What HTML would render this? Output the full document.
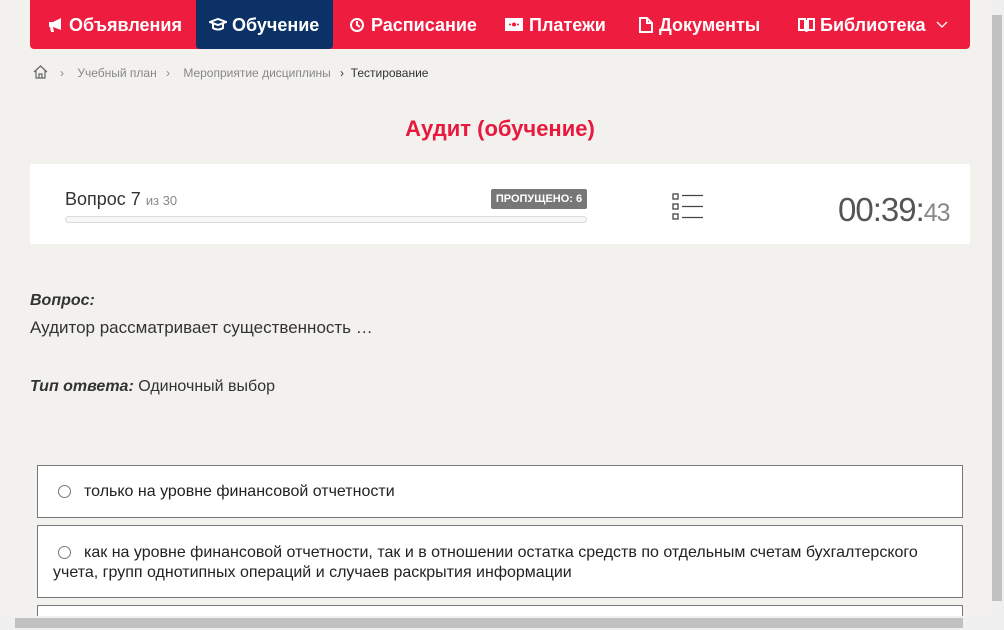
<!DOCTYPE html>
<html><head><meta charset="utf-8"><style>
*{box-sizing:border-box;margin:0;padding:0}
html,body{width:1004px;height:630px;overflow:hidden}
body{background:#f2f1ee;font-family:"Liberation Sans",sans-serif;position:relative;color:#222}
.nav{position:absolute;left:30px;top:0;width:940px;height:49px;background:#ee1c3f;border-radius:0 0 4px 4px}
.act{position:absolute;left:166px;top:0;width:137px;height:49px;background:#0b3166;border-radius:0 0 4px 4px}
.t{position:absolute;top:14px;color:#fff;font-size:18px;font-weight:bold;white-space:nowrap;line-height:22px}
.ic{position:absolute;top:17px}
.bc{position:absolute;top:66px;font-size:12px;color:#888}
.title{position:absolute;top:116px;left:0;width:1000px;text-align:center;color:#e8193c;font-size:22px;font-weight:bold}
.card{position:absolute;left:30px;top:164px;width:940px;height:80px;background:#fff}
.opt{position:absolute;left:37px;width:926px;background:#fff;border:1px solid #777;font-size:16px;color:#222}
.radio{display:inline-block;width:13px;height:13px;border:1px solid #777;border-radius:50%;vertical-align:-2px;margin-right:13px;background:#fff}
</style></head><body>
<div class="nav"><div class="act"></div></div>
<svg class="ic" style="left:48px" width="16" height="16" fill="#fff"><path d="M1 5h4l8-4v12l-8-3H5l1 5H3L2 10H1z"/></svg>
<div class="t" style="left:69px">Объявления</div>
<svg class="ic" style="left:209px" width="18" height="16" fill="none" stroke="#fff" stroke-width="2"><path d="M1 5l8-3 8 3-8 3z"/><path d="M4 7v4c3 2 7 2 10 0V7"/></svg>
<div class="t" style="left:232px">Обучение</div>
<svg class="ic" style="left:349px" width="16" height="16" fill="none" stroke="#fff" stroke-width="2"><circle cx="8" cy="8" r="6"/><path d="M8 4v4l3 2"/></svg>
<div class="t" style="left:371px">Расписание</div>
<svg class="ic" style="left:505px;top:18px" width="18" height="13"><rect x="1" y="1" width="16" height="11" fill="none" stroke="#fff" stroke-width="2"/><rect x="1" y="1" width="16" height="11" fill="#fff"/><circle cx="9" cy="6.5" r="2" fill="#ee1c3f"/><circle cx="5" cy="6.5" r="1" fill="#ee1c3f"/><circle cx="13" cy="6.5" r="1" fill="#ee1c3f"/></svg>
<div class="t" style="left:529px">Платежи</div>
<svg class="ic" style="left:639px" width="14" height="16" fill="none" stroke="#fff" stroke-width="2"><path d="M1 1h7l5 5v9H1z M8 1v5h5"/></svg>
<div class="t" style="left:659px">Документы</div>
<svg class="ic" style="left:798px" width="17" height="16" fill="none" stroke="#fff" stroke-width="2"><path d="M1 2h6v11H1z M10 2h6v11h-6z M8.5 3v12"/></svg>
<div class="t" style="left:820px">Библиотека</div>
<svg class="ic" style="left:936px;top:21px" width="12" height="8" fill="none" stroke="#fff" stroke-width="1.3"><path d="M1 1l5 5 5-5"/></svg>
<svg style="position:absolute;left:33px;top:65px" width="15" height="14" fill="none" stroke="#666" stroke-width="1.2"><path d="M1 7l6.5-6 6.5 6M3 5v8h9V5M6 13V9h3v4"/></svg>
<div class="bc" style="left:60px">›&nbsp;&nbsp;&nbsp;&nbsp;Учебный план</div>
<div class="bc" style="left:166px">›&nbsp;&nbsp;&nbsp;&nbsp;Мероприятие дисциплины</div>
<div class="bc" style="left:340px;color:#333">›&nbsp;&nbsp;Тестирование</div>
<div class="title">Аудит (обучение)</div>
<div class="card">
<div style="position:absolute;left:35px;top:25px;font-size:18px;color:#333">Вопрос 7 <span style="font-size:13px;color:#888">из 30</span></div>
<div style="position:absolute;left:35px;top:52px;width:522px;height:7px;border:1px solid #ddd;border-radius:4px;background:#f7f7f7"></div>
<div style="position:absolute;left:461px;top:25px;width:96px;height:20px;background:#777;color:#fff;font-size:11px;font-weight:bold;text-align:center;line-height:20px;border-radius:2px">ПРОПУЩЕНО: 6</div>
<svg style="position:absolute;left:642px;top:29px" width="32" height="28" stroke="#444" fill="none" stroke-width="1.3"><rect x="1" y="1" width="5" height="5"/><rect x="1" y="11" width="5" height="5"/><rect x="1" y="21" width="5" height="5"/><path d="M10 2.5H31M10 13.5H31M10 24.5H31"/></svg>
<div style="position:absolute;left:808px;top:27px;font-size:33px;color:#555;letter-spacing:-1px">00:39:<span style="font-size:25px;color:#888">43</span></div>
</div>
<div style="position:absolute;left:30px;top:292px;font-size:16px;font-style:italic;font-weight:bold;color:#333">Вопрос:</div>
<div style="position:absolute;left:30px;top:318px;font-size:17px;color:#333">Аудитор рассматривает существенность …</div>
<div style="position:absolute;left:30px;top:378px;font-size:16px;color:#333"><b><i>Тип ответа:</i></b> Одиночный выбор</div>
<div class="opt" style="top:465px;height:53px;padding:17px 0 0 20px"><span class="radio"></span>только на уровне финансовой отчетности</div>
<div class="opt" style="top:525px;height:73px;padding:17px 20px 0 15px;line-height:20px"><span class="radio" style="margin-left:5px"></span>как на уровне финансовой отчетности, так и в отношении остатка средств по отдельным счетам бухгалтерского учета, групп однотипных операций и случаев раскрытия информации</div>
<div class="opt" style="top:605px;height:25px;border-bottom:none"></div>
<div style="position:absolute;left:990px;top:0;width:14px;height:616px;background:#f0f0f0"></div>
<div style="position:absolute;left:992px;top:15px;width:10px;height:586px;background:#c1c1c1"></div>
<div style="position:absolute;left:0;top:616px;width:1004px;height:14px;background:#f0f0f0"></div>
<div style="position:absolute;left:15px;top:618px;width:948px;height:10px;background:#c1c1c1"></div>
</body></html>
